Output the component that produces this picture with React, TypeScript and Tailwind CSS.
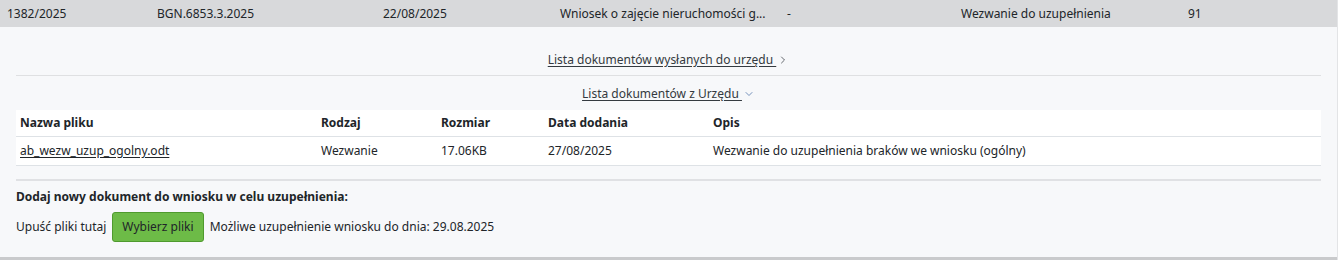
import { ChevronDown, ChevronRight } from 'lucide-react';

const headerCells = [
    { text: '1382/2025', w: 'w-[150px]' },
    { text: 'BGN.6853.3.2025', w: 'w-[226px]' },
    { text: '22/08/2025', w: 'w-[177px]' },
    { text: 'Wniosek o zajęcie nieruchomości g...', w: 'w-[227px]' },
    { text: '-', w: 'w-[174px]' },
    { text: 'Wezwanie do uzupełnienia', w: 'w-[227px]' },
    { text: '91', w: 'flex-1' },
];

const files = [
    {
        name: 'ab_wezw_uzup_ogolny.odt',
        kind: 'Wezwanie',
        size: '17.06KB',
        date: '27/08/2025',
        desc: 'Wezwanie do uzupełnienia braków we wniosku (ogólny)',
    },
];

export default function App() {
    return (
        <div className="h-[260px] w-[1344px] bg-white font-['Noto_Sans',sans-serif] text-[12px] text-[#212529]">
            <div className="w-[1338px] border-r border-[#e3e4e6]">
                <div className="flex h-[27px] items-center bg-[#d8d9db] pl-[7px]">
                    {headerCells.map((c, i) => (
                        <div key={i} className={`${c.w} whitespace-nowrap`}>
                            {c.text}
                        </div>
                    ))}
                </div>

                <div className="border-b-[3px] border-[#c9cacc] bg-[#f7f8fa] px-4 pb-[15px]">
                    <div className="flex h-[49px] items-end justify-center border-b border-[#dfe0e2] pb-[6px]">
                        <a className="flex items-center text-[#343a40]">
                            <span className="underline underline-offset-2">
                                Lista dokumentów wysłanych do urzędu&nbsp;
                            </span>
                            <ChevronRight className="ml-[1px] h-3 w-3" strokeWidth={1.5} />
                        </a>
                    </div>
                    <div className="flex h-[34px] items-center justify-center pt-[2px]">
                        <a className="flex items-center text-[#343a40]">
                            <span className="underline underline-offset-2">
                                Lista dokumentów z Urzędu&nbsp;
                            </span>
                            <ChevronDown className="ml-[1px] h-3 w-3 text-[#4a6fa5]" strokeWidth={1.5} />
                        </a>
                    </div>

                    <table className="w-full border-collapse bg-white text-left">
                        <thead>
                            <tr className="h-[26px] border-b border-[#dee2e6] font-bold">
                                <th className="w-[301px] px-1">Nazwa pliku</th>
                                <th className="w-[120px] px-1">Rodzaj</th>
                                <th className="w-[107px] px-1">Rozmiar</th>
                                <th className="w-[165px] px-1">Data dodania</th>
                                <th className="px-1">Opis</th>
                            </tr>
                        </thead>
                        <tbody>
                            {files.map((f) => (
                                <tr
                                    key={f.name}
                                    className="h-[29px] border-b border-[#dee2e6]"
                                >
                                    <td className="px-1">
                                        <a className="underline underline-offset-2">
                                            {f.name}
                                        </a>
                                    </td>
                                    <td className="px-1">{f.kind}</td>
                                    <td className="px-1">{f.size}</td>
                                    <td className="px-1">{f.date}</td>
                                    <td className="px-1">{f.desc}</td>
                                </tr>
                            ))}
                        </tbody>
                    </table>

                    <div className="mt-[13px] border-t-2 border-[#e0e1e4] pt-[7px]">
                        <div className="font-bold">
                            Dodaj nowy dokument do wniosku w celu uzupełnienia:
                        </div>
                        <div className="mt-[6px] flex items-center gap-[6px]">
                            <span>Upuść pliki tutaj</span>
                            <button className="h-[30px] rounded-[3px] border border-[#4f9a2e] bg-[#6dbb47] px-[9px] text-[#212529]">
                                Wybierz pliki
                            </button>
                            <span>Możliwe uzupełnienie wniosku do dnia: 29.08.2025</span>
                        </div>
                    </div>
                </div>
            </div>
        </div>
    );
}
